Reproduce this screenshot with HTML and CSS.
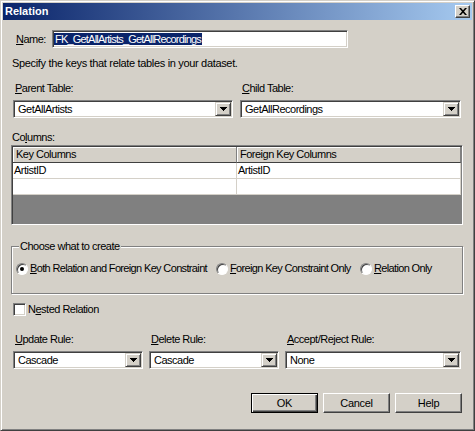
FILE: index.html
```html
<!DOCTYPE html>
<html>
<head>
<meta charset="utf-8">
<title>Relation</title>
<link rel="stylesheet" href="styles.css">
</head>
<body>
<div class="window">
  <div class="titlebar">
    <span class="title">Relation</span>
    <span class="close"><svg class="close-x" width="8" height="7" viewBox="0 0 8 7"><path d="M0 0h2l2 2.3 2-2.3h2l-3 3.5 3 3.5h-2l-2-2.3-2 2.3h-2l3-3.5z"/></svg></span>
  </div>
  <div class="content">
    <div class="name-row">
      <span class="lbl name-lbl"><u>N</u>ame:</span>
      <div class="textbox"><span class="sel">FK_GetAllArtists_GetAllRecordings</span></div>
    </div>
    <p class="hint">Specify the keys that relate tables in your dataset.</p>
    <div class="tables">
      <div class="field">
        <span class="lbl fl"><u>P</u>arent Table:</span>
        <div class="combo"><span class="val">GetAllArtists</span><span class="dd"><svg width="7" height="4" viewBox="0 0 7 4"><path d="M0 0H7V1H6V2H5V3H4V4H3V3H2V2H1V1H0Z"/></svg></span></div>
      </div>
      <div class="field">
        <span class="lbl fl"><u>C</u>hild Table:</span>
        <div class="combo"><span class="val">GetAllRecordings</span><span class="dd"><svg width="7" height="4" viewBox="0 0 7 4"><path d="M0 0H7V1H6V2H5V3H4V4H3V3H2V2H1V1H0Z"/></svg></span></div>
      </div>
    </div>
    <span class="lbl cols-lbl">Co<u>l</u>umns:</span>
    <div class="grid">
      <div class="row head">
        <div class="cell c1">Key Columns</div>
        <div class="cell c2">Foreign Key Columns</div>
      </div>
      <div class="row data">
        <div class="cell c1">ArtistID</div>
        <div class="cell c2">ArtistID</div>
      </div>
      <div class="row data">
        <div class="cell c1"></div>
        <div class="cell c2"></div>
      </div>
    </div>
    <fieldset class="group">
      <legend class="legend">Choose what to create</legend>
      <div class="radios">
        <span class="opt opt-both"><span class="radio checked"></span><span><u>B</u>oth Relation and Foreign Key Constraint</span></span>
        <span class="opt opt-fk"><span class="radio"></span><span><u>F</u>oreign Key Constraint Only</span></span>
        <span class="opt"><span class="radio"></span><span><u>R</u>elation Only</span></span>
      </div>
    </fieldset>
    <div class="check-row">
      <span class="checkbox"></span><span>N<u>e</u>sted Relation</span>
    </div>
    <div class="rules">
      <div class="field">
        <span class="lbl fl"><u>U</u>pdate Rule:</span>
        <div class="combo"><span class="val">Cascade</span><span class="dd"><svg width="7" height="4" viewBox="0 0 7 4"><path d="M0 0H7V1H6V2H5V3H4V4H3V3H2V2H1V1H0Z"/></svg></span></div>
      </div>
      <div class="field">
        <span class="lbl fl"><u>D</u>elete Rule:</span>
        <div class="combo"><span class="val">Cascade</span><span class="dd"><svg width="7" height="4" viewBox="0 0 7 4"><path d="M0 0H7V1H6V2H5V3H4V4H3V3H2V2H1V1H0Z"/></svg></span></div>
      </div>
      <div class="field">
        <span class="lbl fl"><u>A</u>ccept/Reject Rule:</span>
        <div class="combo"><span class="val">None</span><span class="dd"><svg width="7" height="4" viewBox="0 0 7 4"><path d="M0 0H7V1H6V2H5V3H4V4H3V3H2V2H1V1H0Z"/></svg></span></div>
      </div>
    </div>
    <div class="buttons">
      <button class="btn default">OK</button>
      <button class="btn">Cancel</button>
      <button class="btn">Help</button>
    </div>
  </div>
</div>
</body>
</html>
```

FILE: styles.css
```css
* { box-sizing: border-box; }
html, body { margin: 0; padding: 0; }
body {
  background: #d4d0c8;
  font-family: "Liberation Sans", Arial, sans-serif;
  font-size: 11px;
  letter-spacing: -0.5px;
  color: #000;
}
u { text-decoration: underline; text-underline-offset: 1px; }

.window {
  width: 475px;
  height: 431px;
  background: #d4d0c8;
  border: 1px solid;
  border-color: #d4d0c8 #404040 #404040 #d4d0c8;
  box-shadow: inset 1px 1px #fff, inset -1px -1px #808080;
  padding: 2px;
  display: flex;
  flex-direction: column;
}
.titlebar {
  height: 17px;
  flex: none;
  background: linear-gradient(to right, #0a246a, #a6caf0);
  display: flex;
  align-items: center;
  justify-content: space-between;
  padding: 0 2px 0 2px;
}
.title {
  color: #fff;
  font-weight: bold;
  letter-spacing: 0;
  line-height: 13px;
}
.close {
  width: 15px;
  height: 13px;
  display: flex;
  align-items: center;
  justify-content: center;
  background: #d4d0c8;
  border: 1px solid;
  border-color: #fff #404040 #404040 #fff;
  box-shadow: inset -1px -1px #808080;
}
.close-x { fill: #000; }

.content {
  flex: 1;
  display: flex;
  flex-direction: column;
  padding: 0 10px;
}
.lbl { display: block; line-height: 13px; white-space: nowrap; }

.name-row {
  display: flex;
  align-items: center;
  margin-top: 10px;
  height: 18px;
}
.name-lbl { margin-left: 3px; width: 36px; }
.textbox {
  width: 296px;
  height: 18px;
  background: #fff;
  border: 1px solid;
  border-color: #808080 #fff #fff #808080;
  box-shadow: inset 1px 1px #404040, inset -1px -1px #d4d0c8;
  padding: 2px 0 0 1px;
  display: flex;
  align-items: flex-start;
}
.sel {
  background: #0a246a;
  color: #fff;
  line-height: 12px;
  padding: 0 1px;
  letter-spacing: -0.8px;
}
.hint {
  margin: 9px 0 0 -1px;
  line-height: 13px;
  letter-spacing: -0.33px;
}

.tables {
  display: grid;
  grid-template-columns: 220px 221px;
  column-gap: 7px;
  margin-top: 12px;
}
.fl { margin-left: 2px; margin-bottom: 5px; }
.combo {
  height: 18px;
  background: #fff;
  border: 1px solid;
  border-color: #808080 #fff #fff #808080;
  box-shadow: inset 1px 1px #404040, inset -1px -1px #d4d0c8;
  padding: 1px 1px 1px 4px;
  display: flex;
  align-items: center;
}
.val { flex: 1; line-height: 13px; white-space: nowrap; }
.dd {
  width: 16px;
  height: 14px;
  flex: none;
  background: #d4d0c8;
  border: 1px solid;
  border-color: #d4d0c8 #404040 #404040 #d4d0c8;
  box-shadow: inset 1px 1px #fff, inset -1px -1px #808080;
  display: flex;
  align-items: center;
  justify-content: center;
}
.dd svg { fill: #000; display: block; }

.cols-lbl { margin: 13px 0 0 -1px; }
.grid {
  margin: 1px -1px 0 -2px;
  height: 80px;
  background: #808080;
  border: 1px solid;
  border-color: #808080 #fff #fff #808080;
  box-shadow: inset 1px 1px #404040;
  padding: 1px 1px 0 1px;
}
.row { display: flex; height: 16px; }
.cell { line-height: 15px; white-space: nowrap; }
.c1 { width: 224px; }
.c2 { flex: 1; }
.head .cell {
  background: #d4d0c8;
  border-right: 1px solid #808080;
  border-bottom: 1px solid #404040;
  box-shadow: inset 1px 1px #fff;
  padding-left: 3px;
}
.data .cell {
  background: #fff;
  border-right: 1px solid #d4d0c8;
  border-bottom: 1px solid #d4d0c8;
  padding-left: 1px;
}

.group {
  margin: 15px -1px 0 -2px;
  height: 54px;
  border: 1px solid #808080;
  box-shadow: inset 1px 1px #fff, 1px 1px #fff;
  padding: 9px 4px 0 4px;
  min-width: 0;
}
.legend {
  margin-left: 3px;
  padding: 0 1px;
  line-height: 13px;
  background: #d4d0c8;
}
.radios {
  display: flex;
  align-items: center;
  height: 13px;
  letter-spacing: -0.65px;
}
.opt { display: flex; align-items: center; gap: 2px; white-space: nowrap; line-height: 13px; }
.opt-both { width: 200px; }
.opt-fk { width: 144px; }
.radio {
  width: 12px;
  height: 12px;
  border-radius: 50%;
  background: #fff;
  border: 1px solid;
  border-color: #808080 #fff #fff #808080;
  box-shadow: inset 1px 1px #404040;
  display: flex;
  align-items: center;
  justify-content: center;
  flex: none;
}
.radio.checked::after {
  content: "";
  width: 4px;
  height: 4px;
  border-radius: 50%;
  background: #000;
}

.check-row {
  display: flex;
  align-items: center;
  gap: 2px;
  margin-top: 9px;
  height: 13px;
  line-height: 13px;
}
.checkbox {
  width: 13px;
  height: 13px;
  flex: none;
  background: #fff;
  border: 1px solid;
  border-color: #808080 #fff #fff #808080;
  box-shadow: inset 1px 1px #404040, inset -1px -1px #d4d0c8;
}

.rules {
  display: grid;
  grid-template-columns: 130px 130px 176px;
  column-gap: 6px;
  margin-top: 17px;
}

.buttons {
  display: flex;
  justify-content: flex-end;
  gap: 5px;
  margin-top: 24px;
}
.btn {
  width: 67px;
  height: 20px;
  margin: 0;
  padding: 0;
  font: inherit;
  letter-spacing: -0.3px;
  color: #000;
  background: #d4d0c8;
  border: 1px solid;
  border-color: #fff #404040 #404040 #fff;
  box-shadow: inset -1px -1px #808080;
}
.btn.default {
  border-color: #000;
  box-shadow: inset 1px 1px #fff, inset -1px -1px #404040, inset -2px -2px #808080;
}
```
